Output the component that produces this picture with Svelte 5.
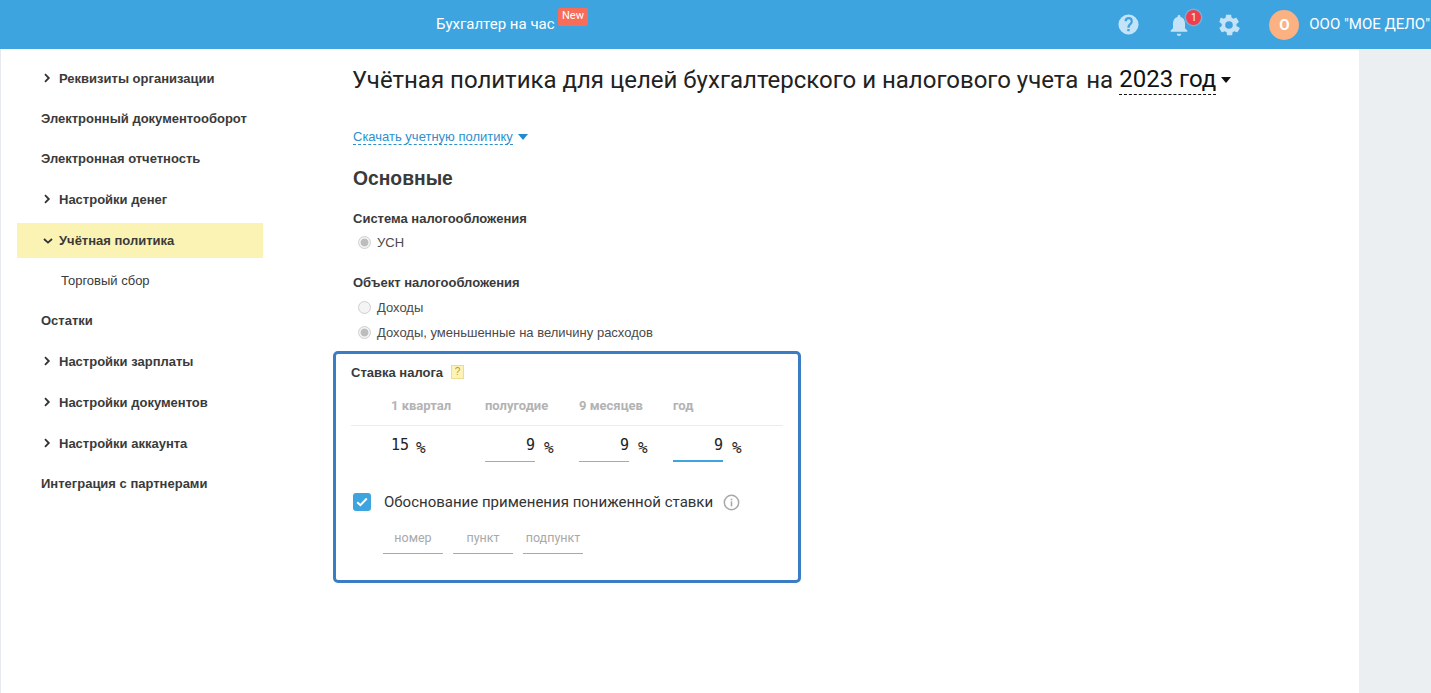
<script>
	const menu = [
		{ label: 'Реквизиты организации', arrow: 'right' },
		{ label: 'Электронный документооборот' },
		{ label: 'Электронная отчетность' },
		{ label: 'Настройки денег', arrow: 'right' },
		{ label: 'Учётная политика', arrow: 'down', active: true },
		{ label: 'Торговый сбор', sub: true },
		{ label: 'Остатки' },
		{ label: 'Настройки зарплаты', arrow: 'right' },
		{ label: 'Настройки документов', arrow: 'right' },
		{ label: 'Настройки аккаунта', arrow: 'right' },
		{ label: 'Интеграция с партнерами' }
	];

	const periods = [
		{ label: '1 квартал', value: '15', plain: true },
		{ label: 'полугодие', value: '9' },
		{ label: '9 месяцев', value: '9' },
		{ label: 'год', value: '9', focused: true }
	];
</script>

<header class="topbar">
	<div class="promo">
		<span class="promo-text">Бухгалтер на час</span>
		<span class="badge-new">New</span>
	</div>
	<div class="tools">
		<svg class="tool help" width="23" height="23" viewBox="0 0 24 24">
			<path fill="#c5e3f6" fill-rule="evenodd" d="M12 1.500a10.500 10.500 0 1 0 0 21 10.500 10.500 0 0 0 0-21zm1.200 17.600h-2.500v-2.400h2.500v2.400zm2.500-7.800-1.100 1.100c-.9.900-1.300 1.600-1.300 3h-2.500v-.6c0-1.200.4-2.200 1.300-3.100l1.500-1.600c.4-.4.700-1 .7-1.600a2 2 0 0 0-4 0H7.900a4.300 4.300 0 0 1 8.600 0c0 1.100-.3 2-.8 2.800z" />
		</svg>
		<div class="bell">
			<svg width="22" height="24" viewBox="0 0 22 24">
				<path fill="#c5e3f6" d="M11 2c.8 0 1.400.6 1.400 1.300v.6c3 .7 4.600 3.300 4.600 6.300v5l2.300 2.400v1.100H2.700v-1.100L5 15.200v-5c0-3 1.600-5.600 4.600-6.300v-.6C9.600 2.600 10.200 2 11 2zM8.800 20.800h4.400a2.200 2.200 0 0 1-4.400 0z" />
			</svg>
			<span class="bell-count">1</span>
		</div>
		<svg class="tool gear" width="24" height="24" viewBox="0 0 24 24">
			<path fill="#c5e3f6" fill-rule="evenodd" d="M19.400 13c.1-.3.1-.7.1-1s0-.7-.1-1l2.200-1.700c.2-.2.2-.4.1-.7l-2.100-3.600c-.1-.2-.4-.3-.6-.2l-2.600 1c-.5-.4-1.100-.7-1.800-1l-.4-2.700c0-.3-.2-.4-.5-.4h-4.200c-.3 0-.5.100-.5.400l-.4 2.700c-.6.300-1.200.6-1.800 1l-2.600-1c-.2-.1-.5 0-.6.200L2.500 8.600c-.2.300-.1.500.1.700L4.800 11c0 .3-.1.700-.1 1s0 .7.1 1l-2.200 1.700c-.2.200-.2.400-.1.700l2.100 3.600c.1.200.4.300.6.200l2.600-1c.5.400 1.100.7 1.800 1l.4 2.700c0 .3.200.4.500.4h4.200c.3 0 .5-.1.500-.4l.4-2.700c.6-.3 1.200-.6 1.800-1l2.600 1c.2.100.5 0 .6-.2l2.100-3.600c.1-.3.1-.5-.1-.7L19.400 13zM12 15.800a3.800 3.800 0 1 1 0-7.600 3.800 3.800 0 0 1 0 7.600z" />
		</svg>
		<div class="account">
			<span class="avatar">О</span>
			<span class="org">ООО "МОЕ ДЕЛО"</span>
		</div>
	</div>
</header>

<div class="page">
	<aside class="sidebar">
		{#each menu as item}
			<div class="menu-item" class:active={item.active} class:sub={item.sub} class:has-arrow={item.arrow}>
				{#if item.arrow === 'right'}
					<svg class="arrow" width="8" height="10" viewBox="0 0 8 10"><path d="M2 1.200 5.800 5 2 8.800" fill="none" stroke="#333" stroke-width="1.800" /></svg>
				{:else if item.arrow === 'down'}
					<svg class="arrow" width="10" height="8" viewBox="0 0 10 8"><path d="M1 2l4 3.600L9 2" fill="none" stroke="#333" stroke-width="1.800" /></svg>
				{/if}
				<span>{item.label}</span>
			</div>
		{/each}
	</aside>

	<main class="content">
		<h1 class="title">
			<span>Учётная политика для целей бухгалтерского и налогового учета</span>
			<span class="year-prefix">на</span>
			<span class="year">2023 год</span>
			<span class="caret-dark"></span>
		</h1>

		<div class="download">
			<span class="download-link">Скачать учетную политику</span>
			<span class="caret-blue"></span>
		</div>

		<h2 class="section">Основные</h2>

		<div class="field-label first">Система налогообложения</div>
		<div class="radio-row"><span class="radio checked"></span>УСН</div>

		<div class="field-label second">Объект налогообложения</div>
		<div class="radio-row"><span class="radio"></span>Доходы</div>
		<div class="radio-row"><span class="radio checked"></span>Доходы, уменьшенные на величину расходов</div>

		<section class="rate-box">
			<div class="rate-head">
				<span>Ставка налога</span>
				<span class="hint">?</span>
			</div>
			<div class="rate-grid heads">
				{#each periods as p}
					<div class="period-label">{p.label}</div>
				{/each}
			</div>
			<div class="rate-grid values">
				{#each periods as p}
					<div class="rate-cell">
						<span class="rate-input" class:plain={p.plain} class:focused={p.focused}>{p.value}</span>
						<span class="pct">%</span>
					</div>
				{/each}
			</div>

			<div class="reason">
				<span class="checkbox">
					<svg width="12" height="10" viewBox="0 0 12 10"><path d="M1.200 5.200 4.400 8.200 10.800 1.500" fill="none" stroke="#fff" stroke-width="2" /></svg>
				</span>
				<span class="reason-text">Обоснование применения пониженной ставки</span>
				<svg class="info" width="17" height="17" viewBox="0 0 17 17">
					<circle cx="8.500" cy="8.500" r="7.200" fill="none" stroke="#a8a8a8" stroke-width="1.500" />
					<rect x="7.700" y="7.400" width="1.600" height="5" fill="#a8a8a8" />
					<rect x="7.700" y="4.700" width="1.600" height="1.600" fill="#a8a8a8" />
				</svg>
			</div>

			<div class="doc-fields">
				<span class="doc-field">номер</span>
				<span class="doc-field">пункт</span>
				<span class="doc-field">подпункт</span>
			</div>
		</section>
	</main>

	<div class="right-rail"></div>
</div>

<style>
	:global(body) {
		background: #fff;
		overflow: hidden;
	}

	.topbar {
		height: 49px;
		background: #3da4e0;
		display: flex;
		align-items: center;
		justify-content: space-between;
		color: #fff;
		font-family: Roboto, sans-serif;
		white-space: nowrap;
	}

	.promo {
		margin-left: 436px;
		margin-bottom: 2px;
		display: flex;
		position: relative;
		font-size: 15px;
	}

	.promo-text {
		line-height: 18px;
	}

	.badge-new {
		position: absolute;
		left: 122px;
		top: -7px;
		height: 18px;
		padding: 0 4px;
		background: #f76d5a;
		border-radius: 2px;
		font-size: 11px;
		line-height: 15px;
	}

	.tools {
		display: flex;
		align-items: center;
		margin-right: 1px;
	}

	.tool {
		display: block;
	}

	.bell {
		position: relative;
		margin-left: 28px;
		height: 24px;
		width: 22px;
	}

	.bell-count {
		position: absolute;
		left: 18px;
		top: -3px;
		width: 15px;
		height: 15px;
		border-radius: 50%;
		background: #ef3f4f;
		box-shadow: 0 0 0 1.500px #6cb3de;
		font-size: 10px;
		line-height: 15px;
		text-align: center;
	}

	.gear {
		margin-left: 27px;
	}

	.account {
		display: flex;
		align-items: center;
		margin-left: 28px;
	}

	.avatar {
		width: 30px;
		height: 30px;
		border-radius: 50%;
		background: #fbb182;
		font-weight: 700;
		font-size: 15px;
		line-height: 30px;
		text-align: center;
	}

	.org {
		margin: 0 0 2px 10px;
		font-size: 15px;
	}

	.page {
		display: flex;
		height: 644px;
		overflow: hidden;
	}

	.sidebar {
		width: 246px;
		margin-left: 17px;
		padding-top: 11px;
		flex: none;
		display: flex;
		flex-direction: column;
		gap: 5px;
		font-family: 'Liberation Sans', sans-serif;
		font-size: 13px;
		font-weight: 700;
		color: #3a3a3a;
		position: relative;
	}

	.sidebar::before {
		content: '';
		position: absolute;
		left: -17px;
		top: 0;
		bottom: 0;
		width: 1px;
		background: #e6eaee;
	}

	.menu-item {
		height: 35px;
		display: flex;
		align-items: center;
		padding-left: 24px;
		white-space: nowrap;
	}

	.menu-item.has-arrow {
		position: relative;
		height: 36px;
		padding-left: 42px;
	}

	.arrow {
		position: absolute;
		left: 26px;
		top: 50%;
		transform: translateY(-50%);
	}

	.menu-item.active {
		height: 35px;
		margin: 1px 0 -0.5px;
		background: #fbf3b4;
	}

	.menu-item.sub {
		padding-left: 44px;
		font-weight: 400;
	}

	.menu-item:nth-child(7) {
		height: 35.500px;
	}

	.menu-item:last-child {
		margin-top: -0.5px;
	}

	.content {
		flex: 1;
		padding-left: 90px;
		font-family: 'Liberation Sans', sans-serif;
		color: #333;
		white-space: nowrap;
		min-width: 0;
	}

	.title {
		margin: 15px 0 0 -1px;
		display: flex;
		align-items: center;
		height: 32px;
		font-family: Roboto, sans-serif;
		font-weight: 400;
		font-size: 24px;
		color: #222;
	}

	.year-prefix {
		margin-left: 8px;
	}

	.year {
		margin-left: 6px;
		color: #111;
		border-bottom: 1px dashed #111;
		line-height: 29px;
	}

	.caret-dark {
		width: 0;
		height: 0;
		margin-left: 5px;
		border-left: 5px solid transparent;
		border-right: 5px solid transparent;
		border-top: 6px solid #111;
	}

	.download {
		margin-top: 32px;
		display: flex;
		align-items: center;
		height: 18px;
		font-size: 13px;
		color: #2d90cd;
	}

	.download-link {
		border-bottom: 1px dashed #2d90cd;
		line-height: 15px;
	}

	.caret-blue {
		width: 0;
		height: 0;
		margin-left: 5px;
		border-left: 5px solid transparent;
		border-right: 5px solid transparent;
		border-top: 6px solid #1f8ccf;
	}

	.section {
		margin: 21px 0 0;
		font-size: 19.300px;
		line-height: 24px;
		font-weight: 700;
		color: #3a3a3a;
	}

	.field-label {
		font-size: 13px;
		font-weight: 700;
		line-height: 16px;
		color: #3a3a3a;
	}

	.field-label.first {
		margin-top: 20px;
	}

	.field-label.second {
		margin-top: 20px;
	}

	.radio-row {
		display: flex;
		align-items: center;
		height: 25px;
		font-size: 13px;
		color: #4a4a4a;
	}

	.field-label.first + .radio-row {
		margin-top: 3px;
	}

	.field-label.second + .radio-row {
		margin-top: 4px;
	}

	.radio {
		box-sizing: border-box;
		width: 13px;
		height: 13px;
		margin: 0 6px 0 5px;
		border-radius: 50%;
		border: 1px solid #cfcfcf;
		background: #f4f4f4;
	}

	.radio.checked {
		background: radial-gradient(circle, #bdbdbd 0 3.500px, #f2f2f2 4.300px);
	}

	.rate-box {
		box-sizing: border-box;
		width: 468px;
		height: 232px;
		margin: 6px 0 0 -20px;
		padding: 9px 15px 0 15px;
		border: 3px solid #3b7dc4;
		border-radius: 5px;
		background: #fff;
	}

	.rate-head {
		display: flex;
		align-items: center;
		gap: 8px;
		height: 18px;
		font-size: 13px;
		font-weight: 700;
		color: #3a3a3a;
	}

	.hint {
		box-sizing: border-box;
		width: 13px;
		height: 14px;
		border: 1px solid #f0dc8c;
		background: #fdf3b8;
		color: #b79a3c;
		font-size: 10px;
		line-height: 12px;
		font-weight: 400;
		text-align: center;
	}

	.rate-grid {
		display: grid;
		grid-template-columns: repeat(4, 94px);
		padding-left: 40px;
	}

	.rate-grid.heads {
		margin-top: 5px;
		height: 39px;
		align-items: center;
		width: 392px;
		border-bottom: 1px solid #ececec;
	}

	.period-label {
		font-family: Roboto, sans-serif;
		font-size: 13px;
		font-weight: 700;
		color: #b3b3b3;
	}

	.rate-grid.values {
		height: 36px;
	}

	.rate-cell {
		display: flex;
		align-items: flex-start;
	}

	.rate-input {
		box-sizing: border-box;
		width: 50px;
		height: 36px;
		border-bottom: 1px solid #a9a9a9;
		font-size: 15px;
		line-height: 39px;
		text-align: right;
		color: #222;
		font-family: 'DejaVu Sans Mono', monospace;
	}

	.rate-input.plain {
		width: auto;
		margin-right: -2px;
		border-bottom: 0;
	}

	.rate-input.focused {
		border-bottom: 2px solid #3da4e0;
	}

	.pct {
		margin-left: 9px;
		font-size: 16px;
		line-height: 44px;
		color: #222;
		font-family: 'DejaVu Sans Mono', monospace;
	}

	.reason {
		display: flex;
		align-items: center;
		margin-top: 30px;
		height: 20px;
		padding-left: 2px;
		font-family: Roboto, sans-serif;
		font-size: 15px;
		color: #333;
	}

	.checkbox {
		box-sizing: border-box;
		width: 18px;
		height: 18px;
		border-radius: 3px;
		background: #3da4e0;
		display: flex;
		align-items: center;
		justify-content: center;
	}

	.reason-text {
		margin-left: 13px;
	}

	.info {
		margin-left: 10px;
	}

	.doc-fields {
		display: flex;
		gap: 10px;
		margin-top: 17px;
		padding-left: 32px;
	}

	.doc-field {
		box-sizing: border-box;
		width: 60px;
		height: 25px;
		border-bottom: 1px solid #a9a9a9;
		font-family: Roboto, sans-serif;
		font-size: 12.500px;
		line-height: 18px;
		color: #a9a9a9;
		text-align: center;
	}

	.right-rail {
		width: 72px;
		flex: none;
		background: #ebeff2;
	}
</style>
